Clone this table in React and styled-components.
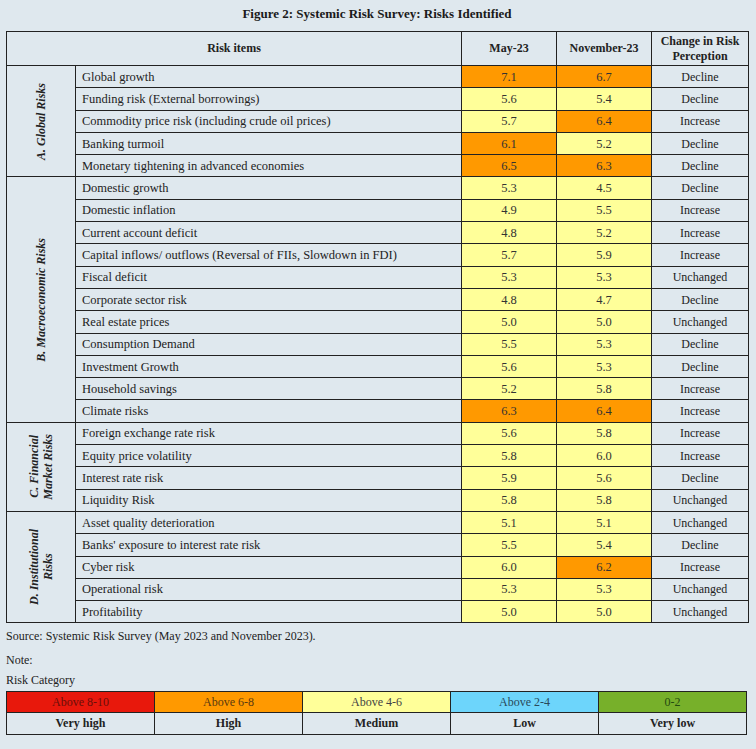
import React from 'react';
import styled, { createGlobalStyle } from 'styled-components';

const GlobalStyle = createGlobalStyle`
    body {
        margin: 0;
        background: #dfe8ee;
        font-family: "Liberation Serif", "DejaVu Serif", serif;
        color: #222;
    }
`;

const COLORS = {
    high: '#ff9900',
    medium: '#ffff99',
};

const Page = styled.div`
    width: 756px;
    height: 749px;
    padding: 6px 8px 0 6px;
    box-sizing: border-box;
`;

const Title = styled.h1`
    margin: 0 0 9px;
    text-align: center;
    font-size: 13px;
    font-weight: bold;
    line-height: 16px;
    color: #1a1a1a;
`;

const Grid = styled.table`
    width: 742px;
    border-collapse: collapse;
    table-layout: fixed;
    font-size: 12.5px;
`;

const Head = styled.th`
    height: 33px;
    border: 1px solid #222;
    font-weight: bold;
    font-size: 12px;
    line-height: 15px;
    padding: 0 4px;
    text-align: center;
    color: #222;
`;

const Group = styled.td`
    border: 1px solid #222;
    padding: 0;
    text-align: center;
    vertical-align: middle;
`;

const GroupLabel = styled.div`
    writing-mode: vertical-rl;
    transform: rotate(180deg);
    margin: 0 auto;
    font-style: italic;
    font-weight: bold;
    font-size: 12px;
    line-height: 14px;
    text-align: center;
`;

const Item = styled.td`
    height: 21.3px;
    border: 1px solid #222;
    padding: 0 6px;
    white-space: nowrap;
    line-height: 14px;
`;

const Score = styled.td`
    border: 1px solid #222;
    background: ${props => COLORS[props.level]};
    text-align: center;
    color: #333;
    line-height: 14px;
`;

const Change = styled.td`
    border: 1px solid #222;
    text-align: center;
    font-size: 12px;
    line-height: 14px;
    color: #222;
`;

const Source = styled.p`
    margin: 5px 0 0;
    font-size: 12px;
    line-height: 16px;
`;

const Note = styled.p`
    margin: 8px 0 0;
    font-size: 12px;
    line-height: 16px;
`;

const Category = styled.div`
    margin-top: 4px;
    font-size: 12px;
    line-height: 16px;
`;

const Legend = styled.table`
    width: 741px;
    margin-top: 3px;
    border-collapse: collapse;
    table-layout: fixed;
    font-size: 12px;
`;

const Swatch = styled.td`
    height: 20px;
    border: 1px solid #222;
    background: ${props => props.bg};
    color: ${props => props.fg};
    text-align: center;
    padding: 0;
`;

const Label = styled.td`
    height: 21px;
    border: 1px solid #222;
    text-align: center;
    font-weight: bold;
    padding: 0;
`;

const groups = [
    {
        name: 'A. Global Risks',
        rows: [
            ['Global growth', 7.1, 6.7, 'Decline'],
            ['Funding risk (External borrowings)', 5.6, 5.4, 'Decline'],
            ['Commodity price risk (including crude oil prices)', 5.7, 6.4, 'Increase'],
            ['Banking turmoil', 6.1, 5.2, 'Decline'],
            ['Monetary tightening in advanced economies', 6.5, 6.3, 'Decline'],
        ],
    },
    {
        name: 'B. Macroeconomic Risks',
        rows: [
            ['Domestic growth', 5.3, 4.5, 'Decline'],
            ['Domestic inflation', 4.9, 5.5, 'Increase'],
            ['Current account deficit', 4.8, 5.2, 'Increase'],
            ['Capital inflows/ outflows (Reversal of FIIs, Slowdown in FDI)', 5.7, 5.9, 'Increase'],
            ['Fiscal deficit', 5.3, 5.3, 'Unchanged'],
            ['Corporate sector risk', 4.8, 4.7, 'Decline'],
            ['Real estate prices', 5.0, 5.0, 'Unchanged'],
            ['Consumption Demand', 5.5, 5.3, 'Decline'],
            ['Investment Growth', 5.6, 5.3, 'Decline'],
            ['Household savings', 5.2, 5.8, 'Increase'],
            ['Climate risks', 6.3, 6.4, 'Increase'],
        ],
    },
    {
        name: ['C. Financial', 'Market Risks'],
        rows: [
            ['Foreign exchange rate risk', 5.6, 5.8, 'Increase'],
            ['Equity price volatility', 5.8, 6.0, 'Increase'],
            ['Interest rate risk', 5.9, 5.6, 'Decline'],
            ['Liquidity Risk', 5.8, 5.8, 'Unchanged'],
        ],
    },
    {
        name: ['D. Institutional', 'Risks'],
        rows: [
            ['Asset quality deterioration', 5.1, 5.1, 'Unchanged'],
            ["Banks' exposure to interest rate risk", 5.5, 5.4, 'Decline'],
            ['Cyber risk', 6.0, 6.2, 'Increase'],
            ['Operational risk', 5.3, 5.3, 'Unchanged'],
            ['Profitability', 5.0, 5.0, 'Unchanged'],
        ],
    },
];

const legend = [
    ['Above 8-10', 'Very high', '#e8180c', '#6a0f0a'],
    ['Above 6-8', 'High', '#ff9900', '#5a3a10'],
    ['Above 4-6', 'Medium', '#ffff99', '#444'],
    ['Above 2-4', 'Low', '#6dd5fb', '#2a4a5a'],
    ['0-2', 'Very low', '#77b02a', '#244a10'],
];

const level = v => (v > 6 ? 'high' : 'medium');

function App() {
    return (
        <Page>
            <GlobalStyle />
            <Title>Figure 2: Systemic Risk Survey: Risks Identified</Title>
            <Grid>
                <colgroup>
                    <col style={{ width: 69 }} />
                    <col style={{ width: 386 }} />
                    <col style={{ width: 95 }} />
                    <col style={{ width: 95 }} />
                    <col style={{ width: 97 }} />
                </colgroup>
                <thead>
                    <tr>
                        <Head colSpan={2}>Risk items</Head>
                        <Head>May-23</Head>
                        <Head>November-23</Head>
                        <Head>Change in Risk Perception</Head>
                    </tr>
                </thead>
                <tbody>
                    {groups.map(g =>
                        g.rows.map((r, i) => (
                            <tr key={r[0]}>
                                {i === 0 && (
                                    <Group rowSpan={g.rows.length}>
                                        <GroupLabel>
                                            {[].concat(g.name).map(line => <div key={line}>{line}</div>)}
                                        </GroupLabel>
                                    </Group>
                                )}
                                <Item>{r[0]}</Item>
                                <Score level={level(r[1])}>{r[1].toFixed(1)}</Score>
                                <Score level={level(r[2])}>{r[2].toFixed(1)}</Score>
                                <Change>{r[3]}</Change>
                            </tr>
                        ))
                    )}
                </tbody>
            </Grid>
            <Source>Source: Systemic Risk Survey (May 2023 and November 2023).</Source>
            <Note>Note:</Note>
            <Category>Risk Category</Category>
            <Legend>
                <tbody>
                    <tr>
                        {legend.map(l => (
                            <Swatch key={l[0]} bg={l[2]} fg={l[3]}>{l[0]}</Swatch>
                        ))}
                    </tr>
                    <tr>
                        {legend.map(l => (
                            <Label key={l[1]}>{l[1]}</Label>
                        ))}
                    </tr>
                </tbody>
            </Legend>
        </Page>
    );
}

export default App;
